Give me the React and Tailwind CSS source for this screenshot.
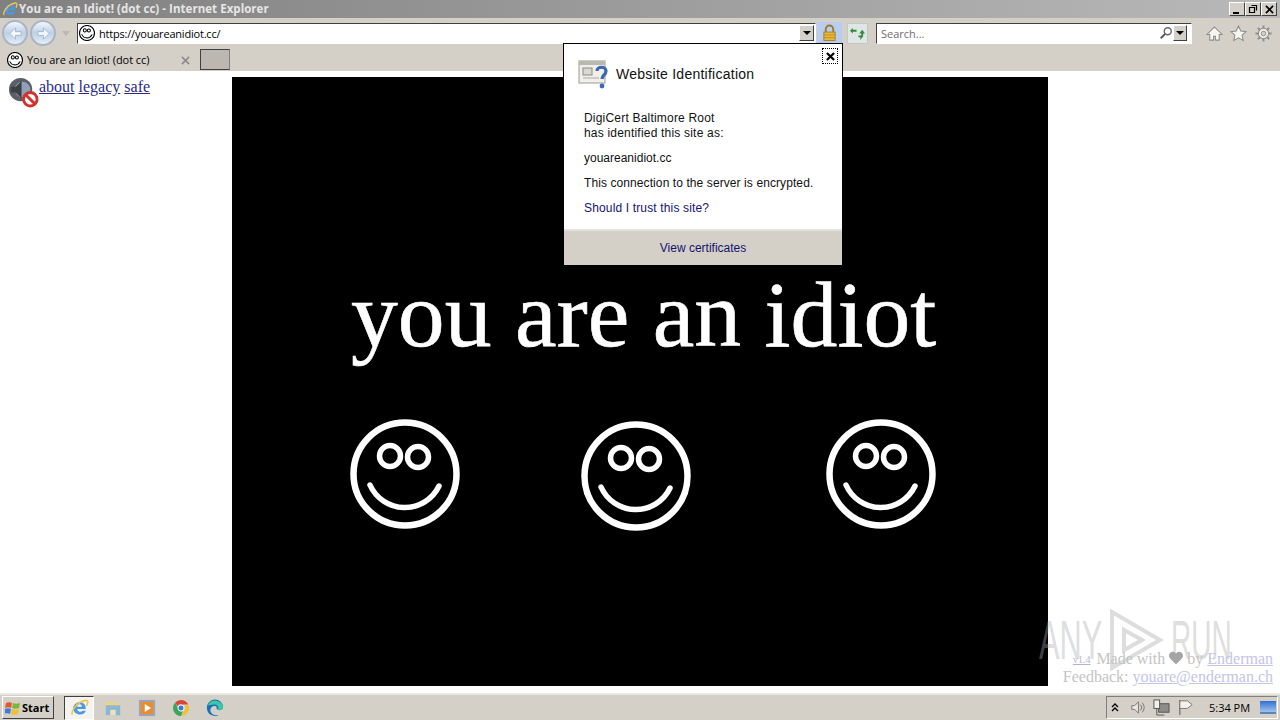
import React from 'react';
import { FaHeart } from 'react-icons/fa';

const Smiley = ({ className, stroke = 'white', fill = 'none', ring = 6.5 }) => (
  <svg viewBox="0 0 110 110" className={className}>
    <circle cx="55" cy="55" r="51.5" fill={fill} stroke={stroke} strokeWidth={ring} />
    <circle cx="40" cy="37" r="10.5" fill="none" stroke={stroke} strokeWidth={ring - 1} />
    <circle cx="68" cy="38" r="10.5" fill="none" stroke={stroke} strokeWidth={ring - 1} />
    <path d="M20 66 A38 38 0 0 0 89 67" fill="none" stroke={stroke} strokeWidth={ring - 1} strokeLinecap="round" />
  </svg>
);

const IeLogo = ({ className }) => (
  <svg viewBox="0 0 24 24" className={className}>
    <path d="M12 5a8 8 0 0 1 8 9H9a4 4 0 0 0 7 2h4a8.5 8.5 0 0 1-16-2 8.5 8.5 0 0 1 8-9zm-3 6h6a3 3 0 0 0-6 0z" fill="#4a9ae0" />
    <path d="M3 21C1 17 8 5 20 3c3-.5 3 3 1 7" fill="none" stroke="#efc64a" strokeWidth="2" />
  </svg>
);

const NavArrow = ({ flip }) => (
  <div className="w-[26px] h-[26px] rounded-full border-2 border-[#a9b4c4] bg-gradient-to-b from-[#f2f6fb] via-[#bcd0e6] to-[#e4edf6] flex items-center justify-center">
    <svg viewBox="0 0 16 16" className={`w-[15px] h-[15px] ${flip ? 'rotate-180' : ''}`}>
      <path d="M2 8l6-6v4h6v4H8v4z" fill="#f4f7fb" stroke="#a3b6cc" strokeWidth="1" />
    </svg>
  </div>
);

const DropArrow = ({ className }) => (
  <div className={`bg-[#d4d0c8] border border-t-white border-l-white border-r-[#404040] border-b-[#404040] flex items-center justify-center ${className}`}>
    <div className="w-0 h-0 border-x-[4px] border-x-transparent border-t-[4px] border-t-black" />
  </div>
);

const WinButton = ({ children }) => (
  <div className="w-[16px] h-[14px] bg-[#d4d0c8] border border-t-white border-l-white border-r-[#404040] border-b-[#404040] flex items-center justify-center">
    {children}
  </div>
);

const TitleBar = () => (
  <div className="h-[18px] flex items-center bg-gradient-to-r from-[#808080] to-[#b9b9b9] pl-[2px] pr-[3px]">
    <IeLogo className="w-[16px] h-[16px]" />
    <span className="ml-[1px] text-[#e6e6e6] text-[11.5px] font-bold font-['Open_Sans',sans-serif] tracking-[0.04px] whitespace-nowrap">
      You are an Idiot! (dot cc) - Internet Explorer
    </span>
    <div className="ml-auto flex">
      <WinButton><div className="w-[6px] h-[2px] bg-black mt-[7px] -ml-[2px]" /></WinButton>
      <WinButton>
        <svg viewBox="0 0 10 10" className="w-[10px] h-[10px]"><path d="M3.5 1.5h5v5M1.5 3.5h5v5h-5z" fill="none" stroke="black" strokeWidth="1.2" /></svg>
      </WinButton>
      <WinButton>
        <svg viewBox="0 0 10 10" className="w-[9px] h-[9px]"><path d="M1 1l8 8M9 1l-8 8" stroke="black" strokeWidth="1.8" /></svg>
      </WinButton>
    </div>
  </div>
);

const Toolbar = () => (
  <div className="h-[28px] flex items-center bg-[#d4d0c8] pl-[2px] pt-[2px]">
    <NavArrow />
    <div className="w-[2px]" />
    <NavArrow flip />
    <div className="ml-[6px] w-0 h-0 border-x-[4px] border-x-transparent border-t-[5px] border-t-[#bcb8b0]" />
    <div className="ml-[7px] w-[739px] h-[21px] bg-white border border-t-[#404040] border-l-[#404040] border-r-white border-b-white flex items-center pl-[1px] pr-[1px]">
      <Smiley className="w-[16px] h-[16px]" stroke="black" fill="white" ring={8} />
      <span className="ml-[4px] text-[11px] tracking-[-0.2px] text-black font-['Open_Sans',sans-serif] leading-none">https://youareanidiot.cc/</span>
      <DropArrow className="ml-auto w-[15px] h-[16px]" />
    </div>
    <div className="ml-[1px] w-[25px] h-[21px] -mt-[1px] bg-[#b9cdf2] flex items-center justify-center">
      <svg viewBox="0 0 16 18" className="w-[15px] h-[18px]">
        <path d="M4 9V5a4 4 0 0 1 8 0v4" fill="none" stroke="#9c7a1e" strokeWidth="2" />
        <rect x="2" y="8" width="12" height="9" fill="#e9b83a" stroke="#a5801f" />
        <path d="M2 11h12M2 14h12" stroke="#b98f22" />
      </svg>
    </div>
    <div className="ml-[5px] w-[21px] h-[21px] bg-[#dfe6e6] border border-[#c4c8c4] flex items-center justify-center">
      <svg viewBox="0 0 16 16" className="w-[15px] h-[15px]">
        <path d="M7 4H3V2L0 5l3 3V6h4z" fill="#2f8a3b" />
        <path d="M9 12h2v3l3-4V8h2l-3-4-3 4h2v2H9z" fill="#2f8a3b" />
      </svg>
    </div>
    <div className="ml-[8px] w-[316px] h-[21px] bg-white border border-t-[#404040] border-l-[#404040] border-r-white border-b-white flex items-center pl-[4px] pr-[4px]">
      <span className="text-[11px] text-[#6f6f6f] font-['Open_Sans',sans-serif] leading-none">Search...</span>
      <svg viewBox="0 0 16 16" className="ml-auto w-[14px] h-[14px]">
        <circle cx="10" cy="6" r="4" fill="none" stroke="#666" strokeWidth="1.6" />
        <path d="M7 9l-5 5" stroke="#555" strokeWidth="2.2" />
      </svg>
      <DropArrow className="w-[14px] h-[16px]" />
    </div>
    <svg viewBox="0 0 18 18" className="ml-[14px] w-[17px] h-[17px]">
      <path d="M9 2L1 10h3v6h4v-4h2v4h4v-6h3z" fill="#f5f5f2" stroke="#8f8d88" strokeWidth="1.1" />
    </svg>
    <svg viewBox="0 0 18 18" className="ml-[7px] w-[17px] h-[17px]">
      <path d="M9 1l2.4 5.4 5.6.6-4.2 3.8 1.2 5.7L9 13.6l-5 2.9 1.2-5.7L1 7l5.6-.6z" fill="#f5f5f2" stroke="#8f8d88" strokeWidth="1.1" />
    </svg>
    <svg viewBox="0 0 18 18" className="ml-[8px] w-[17px] h-[17px]">
      <circle cx="9" cy="9" r="5.5" fill="#eeece8" stroke="#8f8d88" strokeWidth="1.1" />
      <circle cx="9" cy="9" r="2.4" fill="#d4d0c8" stroke="#8f8d88" />
      <path d="M9 0.5v3M9 14.5v3M0.5 9h3M14.5 9h3M3 3l2 2M13 13l2 2M15 3l-2 2M5 13l-2 2" stroke="#8f8d88" strokeWidth="2" />
    </svg>
  </div>
);

const TabRow = () => (
  <div className="h-[25px] flex items-end bg-[#d4d0c8]">
    <div className="w-[196px] h-[22px] flex items-center pl-[7px] pr-[6px]">
      <Smiley className="w-[16px] h-[16px]" stroke="black" fill="white" ring={8} />
      <span className="ml-[4px] text-[11px] tracking-[-0.05px] text-black font-['Open_Sans',sans-serif] whitespace-nowrap">You are an Idiot! (dot cc)</span>
      <svg viewBox="0 0 10 10" className="ml-auto w-[9px] h-[9px]"><path d="M1 1l8 8M9 1l-8 8" stroke="#8d8d8d" strokeWidth="1.8" /></svg>
    </div>
    <div className="ml-[4px] mb-[1px] w-[30px] h-[21px] bg-[#bdb7b2] border border-t-[#404040] border-l-[#404040] border-r-[#808080] border-b-[#404040]" />
  </div>
);

const Sidebar = () => (
  <div className="w-[232px] pl-[8px] pt-[6px] flex items-start font-['Liberation_Serif',serif] text-[16px] text-[#2b2b86]">
    <div className="w-[31px] h-[31px]">
      <svg viewBox="0 0 32 32" className="w-full h-full">
        <circle cx="13" cy="13" r="12" fill="#5b5f66" />
        <circle cx="15" cy="13" r="8" fill="#8fa0ba" />
        <path d="M3 10h5l6-6v18l-6-6H3z" fill="#3d3f44" />
        <circle cx="23" cy="23" r="7" fill="#fff" stroke="#d3312c" strokeWidth="3" />
        <path d="M18 18l10 10" stroke="#d3312c" strokeWidth="3" />
      </svg>
    </div>
    <div className="flex gap-[4px] mt-[1px] leading-[18px]">
      <a className="underline">about</a>
      <a className="underline">legacy</a>
      <a className="underline">safe</a>
    </div>
  </div>
);

const Stage = () => (
  <div className="w-[816px] h-[609px] mt-[6px] bg-black pt-[191px] pl-[118px]">
    <div className="w-[589px] h-[112px] overflow-hidden">
      <h1 className="font-['Liberation_Serif',serif] text-white text-[93.7px] leading-[94px] font-normal whitespace-nowrap pl-[1px] [-webkit-text-stroke:0.6px_white]">you are an idiot!</h1>
    </div>
    <div className="flex items-start mt-[39px]">
      <Smiley className="w-[110px] h-[110px]" />
      <Smiley className="w-[110px] h-[110px] ml-[121px] mt-[2px]" />
      <Smiley className="w-[110px] h-[110px] ml-[135px]" />
    </div>
  </div>
);

const IdentityPopup = () => (
  <div className="absolute left-[563px] top-[43px] w-[280px] h-[223px] bg-white border border-black flex flex-col font-['Liberation_Sans',sans-serif] text-[12px] text-[#111]">
    <div className="absolute right-[4px] top-[4px] w-[16px] h-[16px] border border-dotted border-black flex items-center justify-center">
      <svg viewBox="0 0 10 10" className="w-[9px] h-[9px]"><path d="M1 1l8 8M9 1l-8 8" stroke="black" strokeWidth="2.4" /></svg>
    </div>
    <div className="flex items-center pl-[14px] pt-[15px]">
      <svg viewBox="0 0 32 32" className="w-[32px] h-[32px]">
        <rect x="1" y="2" width="26" height="22" fill="#f1efe9" stroke="#9a9a94" />
        <rect x="1" y="2" width="26" height="4" fill="#b9b8b1" />
        <rect x="5" y="9" width="9" height="7" fill="#d9d9d3" stroke="#8b8b85" />
        <path d="M5 19h16" stroke="#aaa" />
        <path d="M19 12c0-5 9-5 9 0 0 4-4 4-4 8" fill="none" stroke="#3a68b4" strokeWidth="3.2" />
        <circle cx="24" cy="27" r="2.4" fill="#3a68b4" />
      </svg>
      <span className="ml-[6px] mb-[3px] text-[14px] tracking-[0.25px] leading-none">Website Identification</span>
    </div>
    <div className="pl-[20px] mt-[20px] leading-[15px]">
      <p className="tracking-[0.2px]">DigiCert Baltimore Root</p>
      <p className="tracking-[0.2px]">has identified this site as:</p>
      <p className="mt-[10px]">youareanidiot.cc</p>
      <p className="mt-[10px] tracking-[0.09px]">This connection to the server is encrypted.</p>
      <p className="mt-[10px] tracking-[0.15px] text-[#14146e]">Should I trust this site?</p>
    </div>
    <div className="mt-auto h-[36px] bg-[#d4d0c8] border-t-2 border-[#e4e2dc] flex items-center justify-center text-[#14146e]">
      View certificates
    </div>
  </div>
);

const PageFooter = () => (
  <>
    <div className="absolute left-[1039px] top-[608px] flex items-center text-[#aaaaaa]/40 pointer-events-none">
      <div className="w-[66px]">
        <span className="block text-[56px] leading-[60px] font-['Liberation_Sans',sans-serif] scale-x-[0.55] origin-left whitespace-nowrap">ANY</span>
      </div>
      <svg viewBox="0 0 60 64" className="w-[62px] h-[64px]">
        <path d="M6 4l48 28L6 60zM18 22l18 10-18 10z" fill="none" stroke="#aaaaaa" strokeOpacity="0.4" strokeWidth="4" />
      </svg>
      <div className="w-[62px] ml-[4px]">
        <span className="block text-[56px] leading-[60px] font-['Liberation_Sans',sans-serif] scale-x-50 origin-left whitespace-nowrap">RUN</span>
      </div>
    </div>
    <div className="absolute right-[7px] top-[648px] text-right font-['Liberation_Serif',serif] text-[16px] leading-[17px] text-[#c4c4c4] whitespace-nowrap">
      <div className="flex items-center justify-end gap-[4px]">
        <span className="mr-[2px] text-[10px] underline text-[#b4b4d0] mt-[3px]">v1.4</span>
        <span>Made with</span>
        <FaHeart className="w-[14px] h-[14px] text-[#a5a5a5]" />
        <span>by</span>
        <a className="underline text-[#c4c4e6]">Enderman</a>
      </div>
      <div>
        Feedback: <a className="underline text-[#c4c4e6]">youare@enderman.ch</a>
      </div>
    </div>
  </>
);

const Taskbar = () => (
  <div className="h-[27px] flex items-center bg-[#d4d0c8] border-t-2 border-[#ece9e3] pl-[2px] pr-[2px]">
    <div className="w-[52px] h-[23px] bg-[#d4d0c8] border border-t-white border-l-white border-r-[#404040] border-b-[#404040] flex items-center pl-[2px]">
      <svg viewBox="0 0 16 16" className="w-[16px] h-[16px]">
        <path d="M1 3c2-1 4-1 6 0L6 8C4 7 2 7 0 8z" fill="#e4572e" />
        <path d="M8 3c2 1 4 1 7 0l-1 5c-2 1-5 1-7 0z" fill="#7fb53c" />
        <path d="M0 9c2-1 4-1 6 0l-1 5c-2-1-4-1-6 0z" fill="#3a7fd5" />
        <path d="M7 9c2 1 5 1 7 0l-1 5c-2 1-5 1-7 0z" fill="#f0c02f" />
      </svg>
      <span className="ml-[1px] text-[11px] font-bold text-black font-['Open_Sans',sans-serif] leading-none">Start</span>
    </div>
    <div className="ml-[10px] w-[30px] h-[24px] bg-[#f4f3ef] border border-t-[#404040] border-l-[#404040] border-r-white border-b-white flex items-center justify-center">
      <IeLogo className="w-[19px] h-[19px]" />
    </div>
    <svg viewBox="0 0 20 20" className="ml-[10px] w-[18px] h-[18px]">
      <path d="M2 3h7l2 2h7v4H2z" fill="#e9d585" />
      <path d="M2 7h16v11H2z" fill="#8fb6cf" />
      <path d="M7 12h6v6H7z" fill="#e9e3c2" />
    </svg>
    <svg viewBox="0 0 20 20" className="ml-[16px] w-[18px] h-[18px]">
      <rect x="1" y="1" width="18" height="18" fill="#8ea8cf" />
      <rect x="3" y="3" width="14" height="14" fill="#ea8b2c" />
      <path d="M7.5 5.5l7 4.5-7 4.5z" fill="#fff" />
    </svg>
    <svg viewBox="0 0 20 20" className="ml-[16px] w-[18px] h-[18px]">
      <path d="M10 1a9 9 0 0 1 8 5h-8a4 4 0 0 0-4 2L3.5 4A9 9 0 0 1 10 1z" fill="#dc4437" />
      <path d="M18 6a9 9 0 0 1-8 13l4-6.5A4 4 0 0 0 14 8z" fill="#f2c12e" />
      <path d="M3.5 4L7 11a4 4 0 0 0 5 2.5L10 19A9 9 0 0 1 3.5 4z" fill="#3aa757" />
      <circle cx="10" cy="10" r="3.4" fill="#3c78d8" stroke="#fff" />
    </svg>
    <svg viewBox="0 0 20 20" className="ml-[16px] w-[18px] h-[18px]">
      <path d="M1 10a9 9 0 0 1 18-1c0 3-3 4-6 3-2-1-1-3-1-3-1-2-6-2-7 2-1 4 3 8 9 7a9 9 0 0 1-13-8z" fill="#1b6fb8" />
      <path d="M2 7a9 9 0 0 1 17 2c0 3-3 4-6 3 2-4-1-6-4-6-3 0-5 1-7 1z" fill="#3cc7a5" />
    </svg>
    <div className="ml-auto w-[172px] h-[23px] border border-t-[#808080] border-l-[#808080] border-r-white border-b-white flex items-center pl-[4px] pr-[1px]">
      <svg viewBox="0 0 8 10" className="w-[8px] h-[10px]"><path d="M1 4l3-3 3 3M1 8l3-3 3 3" fill="none" stroke="black" strokeWidth="1.3" /></svg>
      <svg viewBox="0 0 18 18" className="ml-[10px] w-[17px] h-[17px]">
        <path d="M3 7h3l4-4v12l-4-4H3z" fill="#e8e6e1" stroke="#77756f" />
        <path d="M12 6a4 4 0 0 1 0 6M14 4a7 7 0 0 1 0 10" fill="none" stroke="#77756f" />
      </svg>
      <svg viewBox="0 0 18 18" className="ml-[7px] w-[17px] h-[17px]">
        <rect x="6" y="5" width="11" height="9" fill="#8d8d8a" stroke="#55534f" />
        <rect x="1" y="1" width="6" height="9" fill="#f2f0eb" stroke="#55534f" />
        <path d="M4 10v7h8" fill="none" stroke="#55534f" />
      </svg>
      <svg viewBox="0 0 18 18" className="ml-[7px] w-[17px] h-[17px]">
        <path d="M3 1v16" stroke="#66645f" strokeWidth="1.2" />
        <path d="M3 2h8l5 4-5 4H3z" fill="#f4f2ee" stroke="#77756f" />
      </svg>
      <span className="ml-[15px] text-[11px] text-black font-['Open_Sans',sans-serif] leading-none whitespace-nowrap">5:34 PM</span>
      <div className="ml-auto w-[16px] h-[13px] bg-gradient-to-b from-[#2f6fd0] to-[#9fc3ea] border-b-2 border-[#5d84b4]" />
    </div>
  </div>
);

export default function App() {
  return (
    <div className="relative w-[1280px] h-[720px] overflow-hidden flex flex-col bg-white">
      <TitleBar />
      <Toolbar />
      <TabRow />
      <div className="flex-1 flex min-h-0">
        <Sidebar />
        <Stage />
      </div>
      <Taskbar />
      <PageFooter />
      <IdentityPopup />
    </div>
  );
}
